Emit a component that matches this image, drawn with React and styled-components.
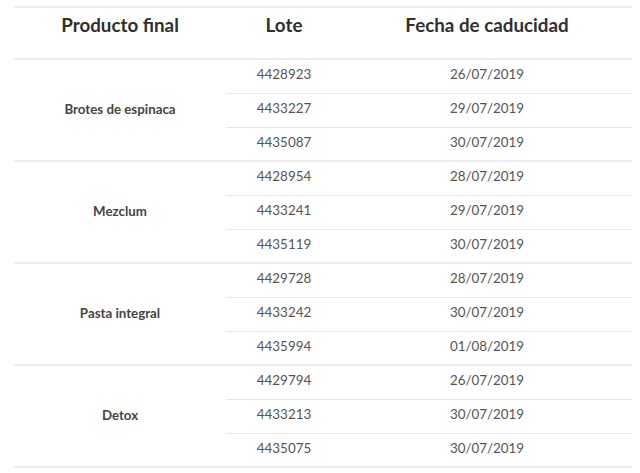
import React from "react";
import styled, { createGlobalStyle } from "styled-components";

const GlobalStyle = createGlobalStyle`
  body {
    margin: 0;
    background: #fff;
    font-family: Lato, "Open Sans", sans-serif;
  }
`;

const lots = [
  {
    product: "Brotes de espinaca",
    rows: [
      ["4428923", "26/07/2019"],
      ["4433227", "29/07/2019"],
      ["4435087", "30/07/2019"],
    ],
  },
  {
    product: "Mezclum",
    rows: [
      ["4428954", "28/07/2019"],
      ["4433241", "29/07/2019"],
      ["4435119", "30/07/2019"],
    ],
  },
  {
    product: "Pasta integral",
    rows: [
      ["4429728", "28/07/2019"],
      ["4433242", "30/07/2019"],
      ["4435994", "01/08/2019"],
    ],
  },
  {
    product: "Detox",
    rows: [
      ["4429794", "26/07/2019"],
      ["4433213", "30/07/2019"],
      ["4435075", "30/07/2019"],
    ],
  },
];

const App = () => {
  return (
    <>
      <GlobalStyle />
      <StWrapper>
        <StTable>
          <colgroup>
            <col style={{ width: 212 }} />
            <col style={{ width: 116 }} />
            <col />
          </colgroup>
          <thead>
            <tr>
              <StHeadCell>Producto final</StHeadCell>
              <StHeadCell>Lote</StHeadCell>
              <StHeadCell>Fecha de caducidad</StHeadCell>
            </tr>
          </thead>
          <tbody>
            {lots.map((group) =>
              group.rows.map(([lot, date], n) => (
                <StRow key={lot} $last={n === group.rows.length - 1}>
                  {n === 0 && (
                    <StProductCell rowSpan={group.rows.length}>
                      {group.product}
                    </StProductCell>
                  )}
                  <StCell>{lot}</StCell>
                  <StCell>{date}</StCell>
                </StRow>
              ))
            )}
          </tbody>
        </StTable>
      </StWrapper>
    </>
  );
};

export default App;

const StWrapper = styled.div`
  padding: 6px 8px 0 14px;
`;

const StTable = styled.table`
  width: 618px;
  border-collapse: collapse;
  table-layout: fixed;
  border-top: 2px solid #eeeeee;
`;

const StHeadCell = styled.th`
  height: 52px;
  padding: 5px 0 19px;
  box-sizing: border-box;
  font-size: 18.8px;
  font-weight: 700;
  color: #2f2f2f;
  text-align: center;
  vertical-align: top;
  line-height: 24px;
  border-bottom: 2px solid #eeeeee;
`;

const StRow = styled.tr`
  height: 34px;
  border-bottom: ${(p) => (p.$last ? "2px solid #eeeeee" : "1px solid #e8e8e8")};
`;

const StCell = styled.td`
  padding: 0 0 4px;
  font-size: 13.4px;
  color: #555;
  text-align: center;
  vertical-align: middle;
  line-height: 16px;
`;

const StProductCell = styled.td`
  padding: 0 0 2px;
  font-size: 13.3px;
  font-weight: 700;
  color: #454545;
  text-align: center;
  vertical-align: middle;
  border-bottom: 2px solid #eeeeee;
`;
